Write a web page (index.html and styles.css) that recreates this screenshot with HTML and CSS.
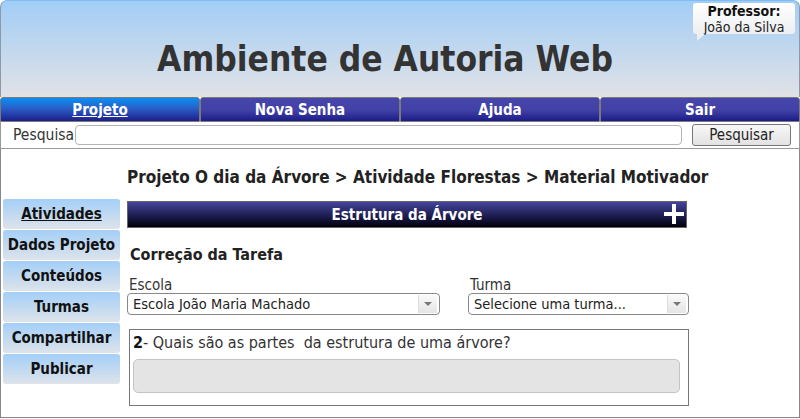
FILE: index.html
```html
<!DOCTYPE html>
<html lang="pt">
<head>
<meta charset="utf-8">
<title>Ambiente de Autoria Web</title>
<link rel="stylesheet" href="styles.css">
</head>
<body>
<div class="page">
  <header class="header">
    <h1 class="title">Ambiente de Autoria Web</h1>
    <div class="user-tip">
      <div class="user-role">Professor:</div>
      <div class="user-name">João da Silva</div>
    </div>
  </header>
  <nav class="nav">
    <a class="nav-item active" href="#">Projeto</a>
    <a class="nav-item" href="#">Nova Senha</a>
    <a class="nav-item" href="#">Ajuda</a>
    <a class="nav-item" href="#">Sair</a>
  </nav>
  <div class="search">
    <label class="search-label">Pesquisa</label>
    <input class="search-input" type="text">
    <button class="search-btn">Pesquisar</button>
  </div>
  <main class="main">
    <aside class="side">
      <a class="side-item current" href="#">Atividades</a>
      <a class="side-item" href="#">Dados Projeto</a>
      <a class="side-item" href="#">Conteúdos</a>
      <a class="side-item" href="#">Turmas</a>
      <a class="side-item" href="#">Compartilhar</a>
      <a class="side-item" href="#">Publicar</a>
    </aside>
    <section class="content">
      <div class="crumb">Projeto O dia da Árvore &gt; Atividade Florestas &gt; Material Motivador</div>
      <div class="panel-bar">
        <span class="panel-title">Estrutura da Árvore</span>
        <svg class="plus" width="20" height="20" viewBox="0 0 20 20"><rect x="8" y="0" width="4" height="20" fill="#fff"/><rect x="0" y="8" width="20" height="4" fill="#fff"/></svg>
      </div>
      <h2 class="task-title">Correção da Tarefa</h2>
      <div class="fields">
        <div class="field field-escola">
          <div class="field-label">Escola</div>
          <div class="select"><span class="select-text">Escola João Maria Machado</span><span class="select-arrow"></span></div>
        </div>
        <div class="field field-turma">
          <div class="field-label">Turma</div>
          <div class="select"><span class="select-text">Selecione uma turma...</span><span class="select-arrow"></span></div>
        </div>
      </div>
      <div class="question">
        <div class="q-text"><b>2</b>- Quais são as partes&nbsp; da estrutura de uma árvore?</div>
        <div class="answer"></div>
      </div>
    </section>
  </main>
</div>
</body>
</html>
```
FILE: styles.css
```css
* { box-sizing: border-box; }
html, body { margin: 0; padding: 0; background: #fff; }
body {
  font-family: "DejaVu Sans Condensed", "DejaVu Sans", Verdana, sans-serif;
  font-stretch: condensed;
  color: #222;
}
.page { width: 800px; height: 419px; overflow: hidden; }

.header {
  position: relative;
  height: 97px;
  border: 1px solid #8a9aaa;
  border-top-color: #7cbdf2;
  border-bottom: none;
  border-radius: 7px 7px 0 0;
  background: linear-gradient(#a2cdf6, #e1e2e6);
  display: flex;
  align-items: center;
  justify-content: center;
  padding: 19px 30px 0 0;
}
.title {
  margin: 0;
  font-size: 35px;
  font-weight: bold;
  color: #333;
}
.user-tip {
  position: absolute;
  top: 2px;
  right: 4px;
  width: 102px;
  height: 31px;
  background: linear-gradient(#ffffff, #eceef0);
  border-radius: 3px;
  text-align: center;
  font-size: 14px;
  line-height: 16px;
  color: #222;
}
.user-tip::after {
  content: "";
  position: absolute;
  left: 4px;
  bottom: -7px;
  border-right: 8px solid transparent;
  border-top: 7px solid #eceef0;
}
.user-role { font-weight: bold; color: #111; }

.nav { display: flex; height: 25px; }
.nav-item {
  flex: 1;
  display: flex;
  align-items: center;
  justify-content: center;
  color: #fff;
  font-weight: bold;
  font-size: 15px;
  text-decoration: none;
  border: 1px solid #7a7a7a;
  border-radius: 3px 3px 0 0;
  background: linear-gradient(#4646ab 0%, #4040a6 55%, #1c1c88 100%);
}
.nav-item.active {
  text-decoration: underline;
  background: linear-gradient(#0a90f2 0%, #2a5ec8 45%, #1e1e8a 100%);
}

.search {
  display: flex;
  align-items: center;
  height: 27px;
  padding: 0 8px 0 12px;
  border: 1px solid #999;
  border-top: none;
  border-bottom: 1px solid #9a9a9a;
}
.search-label { font-size: 15.5px; color: #333; }
.search-input {
  width: 608px;
  height: 20px;
  margin: 0 10px 0 1px;
  border: 1px solid #b4b4b4;
  border-radius: 4px;
  background: #fff;
}
.search-btn {
  width: 99px;
  height: 22px;
  padding: 0;
  font-family: "DejaVu Sans Condensed", "DejaVu Sans", Verdana, sans-serif;
  font-stretch: condensed;
  font-size: 15px;
  color: #222;
  border: 1px solid #777;
  border-radius: 3px;
  background: linear-gradient(#f8f8f8, #e2e2e2);
}

.main {
  display: flex;
  height: 269px;
  border: 1px solid #888;
  border-top: none;
}
.side {
  width: 117px;
  margin: 49px 0 0 2px;
  display: flex;
  flex-direction: column;
}
.side-item {
  height: 31px;
  border-radius: 3px;
  border-top: 1px solid #fff;
  display: flex;
  align-items: center;
  justify-content: center;
  font-size: 15px;
  font-weight: bold;
  color: #111;
  text-decoration: none;
  background: linear-gradient(#a4cff8, #dde3ea);
  white-space: nowrap;
}
.side-item.current { text-decoration: underline; }

.content { margin-left: 7px; width: 562px; }
.crumb {
  margin: 18px 0 0 0;
  font-size: 17px;
  font-weight: bold;
  color: #222;
  line-height: 20px;
  white-space: nowrap;
}
.panel-bar {
  position: relative;
  margin-top: 14px;
  width: 560px;
  height: 27px;
  border: 1px solid #666;
  background: linear-gradient(#44449c, #1a1a4a 60%, #000008);
  display: flex;
  align-items: center;
  justify-content: center;
}
.panel-title { color: #fff; font-weight: bold; font-size: 15px; }
.plus { position: absolute; right: 2px; top: 2px; }

.task-title {
  margin: 17px 0 0 3px;
  font-size: 16px;
  font-weight: bold;
  color: #222;
  line-height: 19px;
}
.fields { display: flex; margin-top: 13px; }
.field-label { font-size: 15px; color: #333; line-height: 16px; margin: 0 0 0 2px; }
.field-escola { width: 313px; }
.field-turma { width: 221px; margin-left: 28px; }
.select {
  height: 22px;
  border: 1px solid #888;
  border-radius: 4px;
  display: flex;
  align-items: center;
  justify-content: space-between;
  padding: 0 2px 0 5px;
  background: #fff;
}
.select-text { font-size: 14.5px; color: #222; }
.select-arrow {
  position: relative;
  width: 19px;
  height: 18px;
  border-left: 1px solid #ddd;
  background: linear-gradient(#fafafa, #e4e4e4);
}
.select-arrow::after {
  content: "";
  position: absolute;
  left: 5px;
  top: 7px;
  border-left: 4px solid transparent;
  border-right: 4px solid transparent;
  border-top: 4px solid #777;
}

.question {
  margin: 14px 0 0 2px;
  width: 560px;
  height: 77px;
  border: 1px solid #777;
  padding: 3px 8px 0 3px;
}
.q-text { font-size: 16px; color: #333; line-height: 19px; }
.q-text b { color: #111; }
.answer {
  margin-top: 7px;
  height: 34px;
  border: 1px solid #c4c4c4;
  border-radius: 5px;
  background: #e4e4e4;
}
```
